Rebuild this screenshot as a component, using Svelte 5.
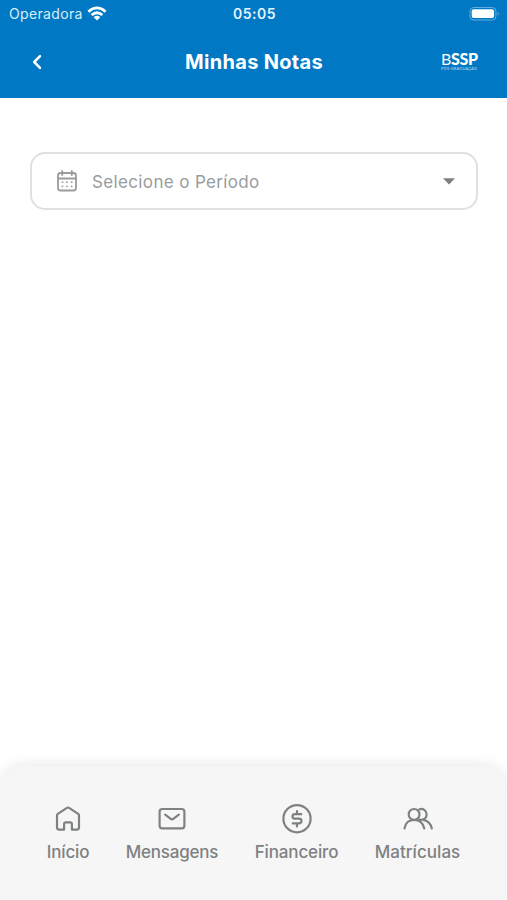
<script>
  const items = [
    { id: 'home', label: 'Início', width: 42, spacing: -0.15 },
    { id: 'mail', label: 'Mensagens', width: 92, spacing: -0.2 },
    { id: 'money', label: 'Financeiro', width: 83, spacing: -0.15 },
    { id: 'people', label: 'Matrículas', width: 85, spacing: 0.05 }
  ];
</script>

<div class="screen">
  <header>
    <div class="status">
      <div class="carrier">
        <span>Operadora</span>
        <svg width="20" height="16" viewBox="0 0 20 16" fill="none" stroke="#fff" stroke-width="2.7">
          <path d="M1.4 5.7Q10 -1.9 18.6 5.7M4.6 9.1Q10 4.4 15.4 9.1" />
          <path d="M6.7 11.2Q10 8.3 13.3 11.2L10 14.5Z" fill="#fff" stroke="none" />
        </svg>
      </div>
      <span class="time">05:05</span>
      <svg class="battery" width="31" height="16" viewBox="0 0 31 16">
        <rect x="1" y="1.5" width="26" height="12.5" rx="3.8" fill="none" stroke="#65ade0" />
        <rect x="2.7" y="3.2" width="22.4" height="8.8" rx="2" fill="#fff" />
        <path d="M28.7 5.8Q31.2 7.8 28.7 9.8Z" fill="#65ade0" />
      </svg>
    </div>
    <div class="bar">
      <svg class="back" width="14" height="18" viewBox="0 0 14 18" fill="none" stroke="#fff" stroke-width="2.5" stroke-linecap="round" stroke-linejoin="round">
        <path d="M10 3.2L4.2 9L10 14.8" />
      </svg>
      <h1>Minhas Notas</h1>
      <div class="logo">
        <div class="brand"><span>B</span>SSP</div>
        <svg width="38" height="5" viewBox="0 0 38 5"><text x="1" y="4.2" textLength="36">PÓS-GRADUAÇÃO</text></svg>
      </div>
    </div>
  </header>

  <main>
    <div class="select">
      <svg width="22" height="24" viewBox="0 0 22 24" fill="none" stroke="#999c9d" stroke-width="1.8" stroke-linecap="round">
        <rect x="2" y="4" width="18" height="17.5" rx="2.5" />
        <path d="M2 9.5H20M6.2 2V6M15.8 2V6" />
        <path d="M6.4 13.2h.1M11 13.2h.1M15.6 13.2h.1M6.4 17.3h.1M11 17.3h.1M15.6 17.3h.1" stroke-width="1.8" />
      </svg>
      <span class="placeholder">Selecione o Período</span>
      <svg class="caret" width="12" height="7" viewBox="0 0 12 7"><path d="M0 .3H12L6 6.5Z" fill="#7d7f80" /></svg>
    </div>
  </main>

  <nav>
    {#each items as item}
      <div class="item" style="width: {item.width}px">
        <svg width="32" height="32" viewBox="0 0 32 32" fill="none" stroke="#7e8182" stroke-width="2.2" stroke-linecap="round" stroke-linejoin="round">
          {#if item.id === 'home'}
            <path d="M5 12.4Q5 11.5 5.8 10.9L14.9 4.9Q16 4.2 17.1 4.9L26.2 10.9Q27 11.5 27 12.4V24.6Q27 26.6 25 26.6H19.9V21.2Q19.9 19.4 18.1 19.4H13.9Q12.1 19.4 12.1 21.2V26.6H7Q5 26.6 5 24.6Z" />
          {:else if item.id === 'mail'}
            <rect x="3.6" y="6" width="24.8" height="19.4" rx="2.6" />
            <path d="M9.2 11.6L14.7 15.8Q16 16.8 17.3 15.8L22.8 11.6" />
          {:else if item.id === 'money'}
            <circle cx="16" cy="15.7" r="13.6" />
            <path d="M20.3 11.2H14.3Q11.5 11.2 11.5 13.4Q11.5 15.7 14.3 15.7H17.7Q20.5 15.7 20.5 18Q20.5 20.3 17.7 20.3H11.7M16 8V11.2M16 20.3V23.5" />
          {:else}
            <circle cx="12.1" cy="11.4" r="5.4" />
            <path d="M17.2 6.4A5.4 5.4 0 1 1 17.2 16.4M2.5 25.4C3.4 20 7 17 12.1 17S21.1 20 22.3 25.4M21.8 17.2C26 18 28.8 21 29.8 25.4" />
          {/if}
        </svg>
        <span style="letter-spacing: {item.spacing}px">{item.label}</span>
      </div>
    {/each}
  </nav>
</div>

<style>
  .screen {
    height: 900px;
    display: flex;
    flex-direction: column;
    background: #fff;
    overflow: hidden;
    font-family: Inter, "Liberation Sans", sans-serif;
  }
  header {
    height: 98px;
    flex: none;
    background: #0078c3;
    color: #fff;
  }
  .status {
    height: 27px;
    display: grid;
    grid-template-columns: 1fr auto 1fr;
    align-items: center;
    padding: 0 7px 0 9px;
    box-sizing: border-box;
    font-size: 14px;
  }
  .carrier {
    display: flex;
    align-items: center;
    gap: 4px;
    color: #d9eefb;
    letter-spacing: 0.35px;
  }
  .time {
    color: #e5f4fe;
    font-weight: 600;
    letter-spacing: 0.45px;
  }
  .battery { justify-self: end; }
  .bar {
    height: 69px;
    display: grid;
    grid-template-columns: 38px 1fr 38px;
    align-items: center;
    padding: 0 29px 0 30px;
  }
  h1 {
    margin: 0;
    font-size: 20px;
    line-height: 28px;
    font-weight: 700;
    text-align: center;
    letter-spacing: 0.3px;
  }
  .logo {
    display: flex;
    flex-direction: column;
  }
  .brand {
    padding-left: 1px;
    font: 900 16px/14px Lato, sans-serif;
    letter-spacing: -0.3px;
  }
  .brand span { font-weight: 400; }
  .logo text {
    font: 600 4px Lato, sans-serif;
    fill: #a6d1ed;
  }
  main {
    flex: 1;
    padding: 54px 29px 0 30px;
  }
  .select {
    height: 58px;
    box-sizing: border-box;
    display: flex;
    align-items: center;
    padding: 0 21px 0 24px;
    border: 2px solid #dfe0e1;
    border-radius: 15px;
  }
  .placeholder {
    flex: 1;
    margin: 1px 0 0 14px;
    font-size: 17px;
    color: #999c9d;
    letter-spacing: 0.36px;
  }
  nav {
    height: 134px;
    flex: none;
    box-sizing: border-box;
    display: flex;
    justify-content: center;
    gap: 37px;
    padding-top: 37px;
    background: #f6f6f6;
    border-radius: 25px 25px 0 0;
    box-shadow: 0 -2px 14px rgba(0, 0, 0, 0.09);
  }
  .item {
    display: flex;
    flex-direction: column;
    align-items: center;
    color: #7e8182;
    font-size: 17px;
    line-height: 24px;
    font-weight: 500;
    white-space: nowrap;
  }
  .item span { margin-top: 5px; }
</style>
